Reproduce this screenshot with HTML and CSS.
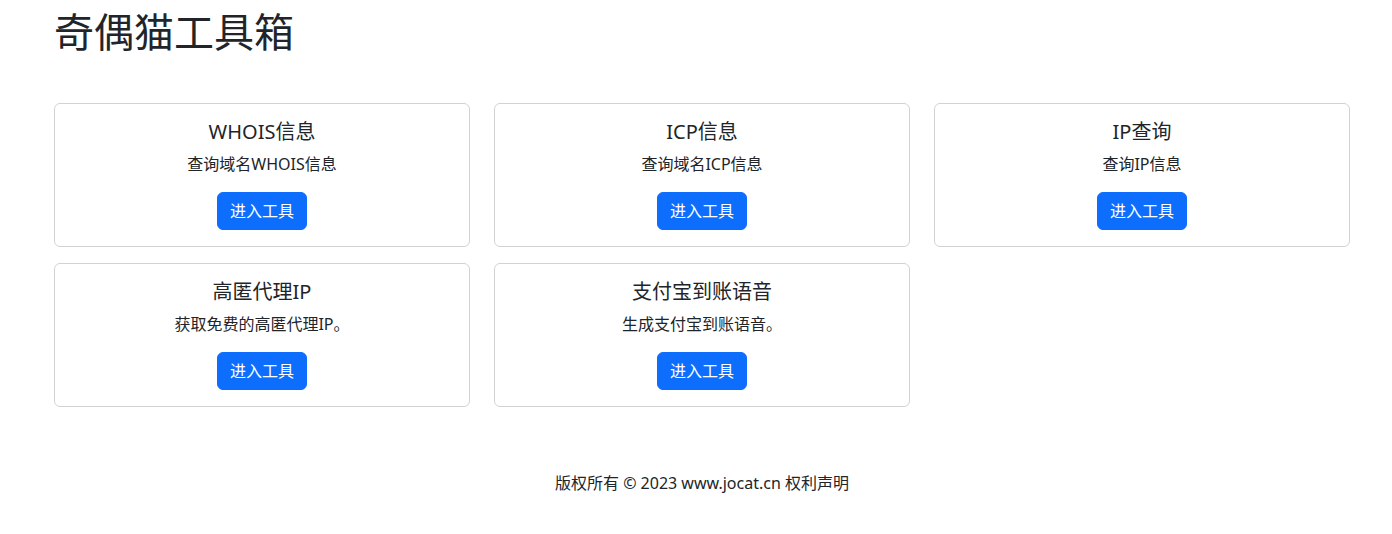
FILE: index.html
```html
<!DOCTYPE html>
<html lang="zh-CN">
<head>
  <meta charset="utf-8">
  <title>奇偶猫工具箱</title>
  <link rel="stylesheet" href="styles.css">
</head>
<body>
  <div class="container">
    <h1 class="site-title">奇偶猫工具箱</h1>

    <div class="tools">
      <div class="card">
        <h5 class="card-title">WHOIS信息</h5>
        <p class="card-text">查询域名WHOIS信息</p>
        <a class="btn" href="#">进入工具</a>
      </div>
      <div class="card">
        <h5 class="card-title">ICP信息</h5>
        <p class="card-text">查询域名ICP信息</p>
        <a class="btn" href="#">进入工具</a>
      </div>
      <div class="card">
        <h5 class="card-title">IP查询</h5>
        <p class="card-text">查询IP信息</p>
        <a class="btn" href="#">进入工具</a>
      </div>
      <div class="card">
        <h5 class="card-title">高匿代理IP</h5>
        <p class="card-text">获取免费的高匿代理IP。</p>
        <a class="btn" href="#">进入工具</a>
      </div>
      <div class="card">
        <h5 class="card-title">支付宝到账语音</h5>
        <p class="card-text">生成支付宝到账语音。</p>
        <a class="btn" href="#">进入工具</a>
      </div>
    </div>

    <footer class="footer">
      版权所有 &copy; 2023 www.jocat.cn 权利声明
    </footer>
  </div>
</body>
</html>
```

FILE: styles.css
```css
html,
body {
  margin: 0;
  background-color: #ffffff;
  color: #212529;
  font-family: "Noto Sans", "Noto Sans CJK SC", sans-serif;
  font-size: 16px;
  line-height: 1.5;
}

.container {
  padding: 0 42px 0 54px;
}

.site-title {
  margin: 8px 0 0 0;
  font-size: 40px;
  font-weight: 400;
  line-height: 48px;
}

.tools {
  display: grid;
  grid-template-columns: repeat(3, 416px);
  column-gap: 24px;
  row-gap: 16px;
  margin-top: 47px;
}

.card {
  border: 1px solid rgba(0, 0, 0, 0.175);
  border-radius: 6px;
  padding: 16px;
  text-align: center;
}

.card-title {
  margin: 0 0 8px 0;
  font-size: 20px;
  font-weight: 400;
  line-height: 24px;
}

.card-text {
  margin: 0 0 16px 0;
  font-size: 16px;
  line-height: 24px;
}

.btn {
  display: inline-block;
  padding: 6px 12px;
  border: 1px solid #0d6efd;
  border-radius: 6px;
  background-color: #0d6efd;
  color: #ffffff;
  font-size: 16px;
  line-height: 24px;
  text-decoration: none;
}

.footer {
  margin-top: 64px;
  text-align: center;
  font-size: 16px;
  line-height: 24px;
}
```
